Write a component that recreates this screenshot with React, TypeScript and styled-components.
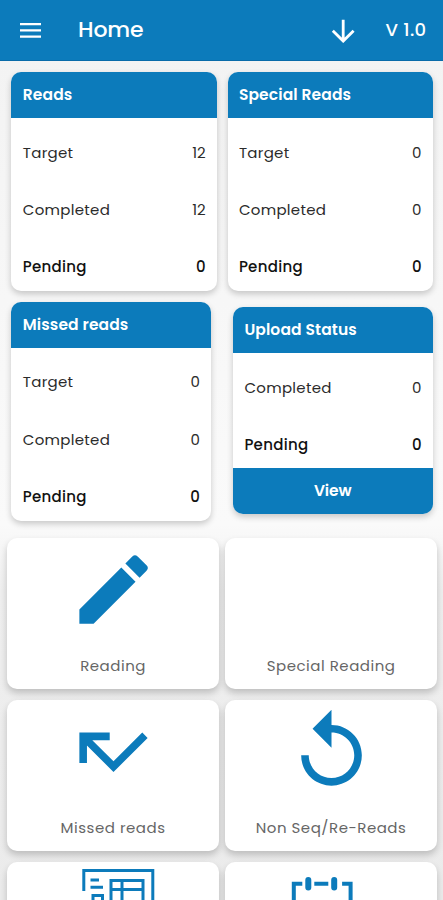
import React from 'react';
import styled, { createGlobalStyle } from 'styled-components';

const BLUE = '#0c7bbb';

const GlobalStyle = createGlobalStyle`
  * { box-sizing: border-box; }
  body {
    margin: 0;
    background: #f6f6f6;
    font-family: Poppins, Inter, 'Open Sans', sans-serif;
    overflow: hidden;
  }
`;

const Screen = styled.div`
  width: 443px;
  height: 900px;
  overflow: hidden;
  display: flex;
  flex-direction: column;
  background: linear-gradient(#f3f3f3 61px, #f7f7f7 300px, #fafafa 525px, #efefef 590px, #ebebeb 900px);
`;

const TopBar = styled.header`
  height: 61px;
  flex: none;
  display: flex;
  align-items: center;
  padding: 0 16.5px 0 17px;
  background: ${BLUE};
  border-bottom: 1px solid #096ba9;
  color: #fff;
`;

const Title = styled.h1`
  margin: 0 auto 0 34px;
  font-size: 22px;
  font-weight: 500;
  line-height: 30px;
  letter-spacing: -0.1px;
`;

const Version = styled.span`
  margin-left: 29px;
  font-size: 18px;
  font-weight: 500;
  line-height: 30px;
  letter-spacing: 0.35px;
`;

const Summary = styled.section`
  display: flex;
  flex: none;
  height: 467px;
  padding: 11px 10.5px 0 11.4px;
  justify-content: space-between;
`;

const Column = styled.div<{ $gap: number; $end?: boolean }>`
  display: flex;
  flex-direction: column;
  gap: ${(p) => p.$gap}px;
  align-items: ${(p) => (p.$end ? 'flex-end' : 'flex-start')};
`;

const Card = styled.article<{ $width: number }>`
  width: ${(p) => p.$width}px;
  border-radius: 10px;
  overflow: hidden;
  background: #fff;
  box-shadow: 0 3px 6px rgba(0, 0, 0, 0.2);
`;

const CardTitle = styled.h2`
  margin: 0;
  height: 46px;
  padding: 0 11.4px;
  background: ${BLUE};
  color: #fff;
  font-size: 15.5px;
  font-weight: 600;
  line-height: 45px;
  letter-spacing: 0.12px;
`;

const Rows = styled.div<{ $height: number }>`
  height: ${(p) => p.$height}px;
  padding: 5.7px 11px 0 11.4px;
`;

const Row = styled.div<{ $weight: number }>`
  height: 57.4px;
  display: flex;
  justify-content: space-between;
  font-size: 15px;
  line-height: 57.4px;
  color: ${(p) => (p.$weight > 400 ? '#111' : '#2b2b2b')};
  font-weight: ${(p) => p.$weight};
`;

const RowLabel = styled.span`
  letter-spacing: 0.3px;
`;

const ViewButton = styled.button`
  display: block;
  width: 100%;
  height: 46px;
  border: 0;
  padding: 0;
  background: ${BLUE};
  color: #fff;
  font: 600 15.5px/46px Poppins, Inter, 'Open Sans', sans-serif;
  letter-spacing: -0.1px;
`;

const Tiles = styled.section`
  display: grid;
  grid-template-columns: 211.5px 211.5px;
  grid-auto-rows: 151px;
  gap: 11px 6.5px;
  padding: 9.6px 0 0 7.3px;
`;

const Tile = styled.article`
  display: flex;
  flex-direction: column;
  align-items: center;
  padding-top: 6.4px;
  border-radius: 10px;
  background: #fff;
  box-shadow: 0 4px 7px rgba(0, 0, 0, 0.2);
`;

const TileIcon = styled.div`
  width: 91px;
  height: 91px;
  color: ${BLUE};

  svg { display: block; width: 91px; height: 91px; fill: currentColor; }
`;

const TileLabel = styled.span`
  margin-top: 18.6px;
  font-size: 15px;
  line-height: 24px;
  color: #666;
  letter-spacing: 0.52px;
  white-space: nowrap;
`;

type Entry = { label: string; value: number; weight?: number };

function Stats({ title, width, entries, action }: {
  title: string; width: number; entries: Entry[]; action?: string;
}) {
  return (
    <Card $width={width}>
      <CardTitle>{title}</CardTitle>
      <Rows $height={action ? 115.4 : 173}>
        {entries.map((e) => (
          <Row key={e.label} $weight={e.weight ?? 400}>
            <RowLabel>{e.label}</RowLabel>
            <span>{e.value}</span>
          </Row>
        ))}
      </Rows>
      {action && <ViewButton>{action}</ViewButton>}
    </Card>
  );
}

const pencil = (
  <svg viewBox="0 0 24 24">
    <path d="M3 17.25V21h3.75L17.81 9.94l-3.75-3.75L3 17.25zM20.71 7.04a1 1 0 0 0 0-1.41l-2.34-2.34a1 1 0 0 0-1.41 0l-1.83 1.83 3.75 3.75 1.83-1.83z" />
  </svg>
);
const missed = (
  <svg viewBox="0 0 24 24">
    <path d="M19.59 7 12 14.59 6.41 9H11V7H3v8h2v-4.59l7 7 9-9L19.59 7z" />
  </svg>
);
const replay = (
  <svg viewBox="0 0 24 24">
    <path d="M12 5V1L7 6l5 5V7c3.31 0 6 2.69 6 6s-2.69 6-6 6-6-2.69-6-6H4c0 4.42 3.58 8 8 8s8-3.58 8-8-3.58-8-8-8z" />
  </svg>
);
const report = (
  <svg viewBox="0 0 91 91">
    <g fill="none" stroke="currentColor" strokeWidth="3">
      <path d="M15.8 23V2.5h69V70h-69V52" />
      <path d="M22.5 12H31M22.5 19.2H35M25 44V27.5h9.5V44z" />
      <path d="M43 12.5h32V44H43zM43 21.5h32M54 12.5V44" />
    </g>
  </svg>
);
const calendar = (
  <svg viewBox="0 0 91 91">
    <g fill="none" stroke="currentColor" strokeWidth="4">
      <path d="M16.3 15.8H7.8V72h56.8V15.8h-8.5M28.3 15.8h14" />
      <path d="M22.3 12v7.5M48.2 12v7.5" strokeWidth="6" strokeLinecap="round" />
    </g>
  </svg>
);

const tiles: { label: string; icon: React.ReactNode }[] = [
  { label: 'Reading', icon: pencil },
  { label: 'Special Reading', icon: null },
  { label: 'Missed reads', icon: missed },
  { label: 'Non Seq/Re-Reads', icon: replay },
  { label: '', icon: report },
  { label: '', icon: calendar },
];

export default function App() {
  return (
    <>
      <GlobalStyle />
      <Screen>
        <TopBar>
          <svg width="27" height="27" viewBox="0 0 27 27" fill="none" stroke="#fff" strokeWidth="2.2">
            <path d="M3 7.2h21M3 13.4h21M3 19.6h21" />
          </svg>
          <Title>Home</Title>
          <svg width="26" height="26" viewBox="0 0 26 26" fill="none" stroke="#fff" strokeWidth="2.8">
            <path d="M13.2 2.8v20.7M2.8 13.7l10.4 10.4 10.4-10.4" />
          </svg>
          <Version>V 1.0</Version>
        </TopBar>
        <Summary>
          <Column $gap={10.5}>
            <Stats title="Reads" width={205.2} entries={[
              { label: 'Target', value: 12 },
              { label: 'Completed', value: 12 },
              { label: 'Pending', value: 0, weight: 500 },
            ]} />
            <Stats title="Missed reads" width={199.5} entries={[
              { label: 'Target', value: 0 },
              { label: 'Completed', value: 0 },
              { label: 'Pending', value: 0, weight: 500 },
            ]} />
          </Column>
          <Column $gap={16} $end>
            <Stats title="Special Reads" width={205} entries={[
              { label: 'Target', value: 0 },
              { label: 'Completed', value: 0 },
              { label: 'Pending', value: 0, weight: 500 },
            ]} />
            <Stats title="Upload Status" width={199.5} action="View" entries={[
              { label: 'Completed', value: 0 },
              { label: 'Pending', value: 0, weight: 500 },
            ]} />
          </Column>
        </Summary>
        <Tiles>
          {tiles.map((t, i) => (
            <Tile key={i}>
              <TileIcon>{t.icon}</TileIcon>
              {t.label && <TileLabel>{t.label}</TileLabel>}
            </Tile>
          ))}
        </Tiles>
      </Screen>
    </>
  );
}
